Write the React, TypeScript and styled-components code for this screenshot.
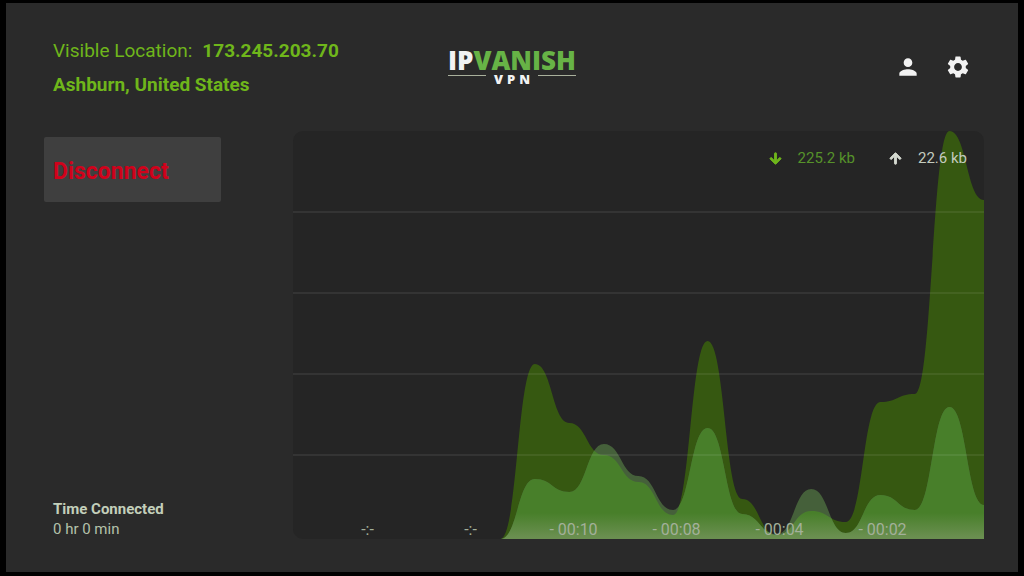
import React from "react";
import styled, { createGlobalStyle } from "styled-components";
import { MdPerson, MdSettings } from "react-icons/md";
import { FaArrowDown, FaArrowUp } from "react-icons/fa";

const GlobalStyle = createGlobalStyle`
  *, *::before, *::after { box-sizing: border-box; }
  body {
    margin: 0;
    background: #000;
    font-family: Roboto, "Liberation Sans", sans-serif;
  }
`;

const Frame = styled.div`
  display: flex;
  min-height: 100vh;
  padding: 3px 6px 4px;
`;

const Screen = styled.div`
  flex: 1;
  display: flex;
  flex-direction: column;
  padding: 31px 34px 33px 38px;
  background: #2a2a2a;
`;

const Header = styled.header`
  display: grid;
  grid-template-columns: 1fr auto 1fr;
  height: 97px;
`;

const Location = styled.div`
  padding-left: 9px;
  font-size: 19px;
  line-height: 34px;
  white-space: nowrap;
  color: #6fb61b;
`;

const LocationLine = styled.p`
  display: flex;
  gap: 10px;
  margin: 0;
`;

const Logo = styled.div`
  display: flex;
  flex-direction: column;
  align-items: center;
  padding: 12px 4px 0 0;
  font-family: "Open Sans", "Noto Sans", sans-serif;
  font-weight: 800;
  color: #f2f2f2;
`;

const LogoName = styled.div`
  font-size: 26px;
  line-height: 28px;
`;

const Accent = styled.span`
  color: #67b346;
`;

const LogoSub = styled.div`
  display: flex;
  gap: 8px;
  width: 100%;
  font-size: 13px;
  line-height: 10px;

  &::before,
  &::after {
    content: "";
    flex: 1;
    height: 1px;
    margin-top: 1px;
    background: #a9b09c;
  }
`;

const LogoLetters = styled.span`
  display: flex;
  gap: 4px;
`;

const Actions = styled.nav`
  display: flex;
  justify-content: flex-end;
  align-items: flex-start;
  gap: 24px;
  padding: 20px 13px 0 0;
`;

const IconButton = styled.button`
  display: flex;
  padding: 0;
  border: 0;
  background: none;
  color: #f2f2f2;
  font-size: 26px;
`;

const Main = styled.main`
  flex: 1;
  display: flex;
  justify-content: space-between;
  gap: 72px;
`;

const Side = styled.section`
  flex: none;
  width: 177px;
  display: flex;
  flex-direction: column;
  justify-content: space-between;
  padding-top: 6px;
`;

const DisconnectButton = styled.button`
  height: 65px;
  padding: 4px 9px 0;
  border: 0;
  border-radius: 2px;
  background: #3f3f3f;
  color: #d0021b;
  font-family: inherit;
  font-size: 23px;
  font-weight: 700;
  text-align: left;
`;

const TimeConnected = styled.div`
  padding-left: 9px;
  font-size: 15px;
  line-height: 20px;
  color: #b4c2aa;
`;

const TimeTitle = styled.div`
  font-weight: 700;
  color: #c3cfba;
`;

const ChartPanel = styled.section`
  flex: 1;
  position: relative;
  min-height: 408px;
  border-radius: 10px;
  background: #252525;
`;

const Plot = styled.svg`
  position: absolute;
  inset: 0;
  width: 100%;
  height: 100%;
`;

const ChartOverlay = styled.div`
  position: absolute;
  inset: 0;
  display: flex;
  flex-direction: column;
  justify-content: space-between;
`;

const Rates = styled.div`
  display: flex;
  justify-content: flex-end;
  gap: 34px;
  padding: 17px 17px 0;
`;

const Rate = styled.span<{ $tone: "down" | "up" }>`
  display: flex;
  align-items: center;
  gap: 16px;
  font-size: 15px;
  line-height: 20px;
  color: ${(p) => (p.$tone === "down" ? "#56922a" : "#c3cbbe")};

  svg {
    font-size: 13px;
    overflow: visible;
    stroke: currentColor;
    stroke-width: 36px;
    color: ${(p) => (p.$tone === "down" ? "#6fb61b" : "#d4d9d0")};
  }
`;

const TimeAxis = styled.div`
  display: grid;
  grid-template-columns: repeat(6, 1fr);
  padding: 0 50px 0 23px;
  font-size: 16px;
  line-height: 18px;
  text-align: center;
  color: #a3b09a;
`;

const WIDTH = 690;
const HEIGHT = 408;
const STEP = 34.5;
const START = 207;

/* Depth of each sample below the top of the panel, oldest first. */
const download = [408, 233, 292, 324, 351, 384, 210, 368, 404, 380, 391, 271, 263, 0, 69];
const upload = [408, 348, 361, 313, 345, 379, 297, 383, 403, 358, 402, 364, 379, 276, 374];

function areaPath(samples: number[]) {
  let d = `M${START} ${HEIGHT}L${START} ${samples[0]}`;
  for (let i = 1; i < samples.length; i++) {
    const x = START + i * STEP;
    const mid = x - STEP / 2;
    d += `C${mid} ${samples[i - 1]} ${mid} ${samples[i]} ${x} ${samples[i]}`;
  }
  return `${d}V${HEIGHT}Z`;
}

const ticks = ["-:-", "-:-", "- 00:10", "- 00:08", "- 00:04", "- 00:02"];

function TrafficPlot() {
  const downPath = areaPath(download);
  const upPath = areaPath(upload);
  return (
    <Plot viewBox={`0 0 ${WIDTH} ${HEIGHT}`} preserveAspectRatio="none" aria-hidden="true">
      <defs>
        <linearGradient id="fade" gradientUnits="userSpaceOnUse" x1="0" y1="382" x2="0" y2="406">
          <stop offset="0" stopColor="#487f2a" />
          <stop offset="1" stopColor="#6a8f50" />
        </linearGradient>
        <clipPath id="shared">
          <path d={downPath} />
        </clipPath>
      </defs>
      <path d={downPath} fill="#365811" />
      <path d={upPath} fill="#45603a" />
      <path d={upPath} fill="url(#fade)" clipPath="url(#shared)" />
      {[81, 162, 243, 324].map((y) => (
        <line key={y} x1="0" x2={WIDTH} y1={y} y2={y} stroke="#fff" strokeOpacity="0.07" strokeWidth="2" />
      ))}
    </Plot>
  );
}

export default function App() {
  return (
    <Frame>
      <GlobalStyle />
      <Screen>
        <Header>
          <Location>
            <LocationLine>
              Visible Location: <strong>173.245.203.70</strong>
            </LocationLine>
            <LocationLine>
              <strong>Ashburn, United States</strong>
            </LocationLine>
          </Location>
          <Logo>
            <LogoName>
              IP<Accent>VANISH</Accent>
            </LogoName>
            <LogoSub>
              <LogoLetters>
                <span>V</span>
                <span>P</span>
                <span>N</span>
              </LogoLetters>
            </LogoSub>
          </Logo>
          <Actions>
            <IconButton aria-label="Account">
              <MdPerson />
            </IconButton>
            <IconButton aria-label="Settings">
              <MdSettings />
            </IconButton>
          </Actions>
        </Header>
        <Main>
          <Side>
            <DisconnectButton>Disconnect</DisconnectButton>
            <TimeConnected>
              <TimeTitle>Time Connected</TimeTitle>
              <div>0 hr 0 min</div>
            </TimeConnected>
          </Side>
          <ChartPanel aria-label="Traffic">
            <TrafficPlot />
            <ChartOverlay>
              <Rates>
                <Rate $tone="down">
                  <FaArrowDown />
                  225.2 kb
                </Rate>
                <Rate $tone="up">
                  <FaArrowUp />
                  22.6 kb
                </Rate>
              </Rates>
              <TimeAxis>
                {ticks.map((tick, i) => (
                  <span key={i}>{tick}</span>
                ))}
              </TimeAxis>
            </ChartOverlay>
          </ChartPanel>
        </Main>
      </Screen>
    </Frame>
  );
}
